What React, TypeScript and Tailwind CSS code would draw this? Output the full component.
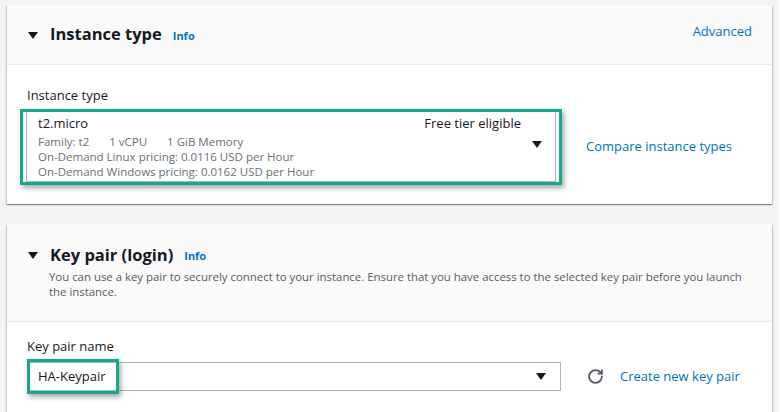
import React from 'react';
import { RotateCw } from 'lucide-react';

const Caret = ({ className = '' }: { className?: string }) => (
  <svg width="10" height="7" viewBox="0 0 10 7" className={className}>
    <polygon points="0,0 10,0 5,7" fill="#16191f" />
  </svg>
);

const panel = 'bg-white shadow-[0_1px_1px_0_rgba(0,28,36,0.3),1px_1px_1px_0_rgba(0,28,36,0.15),-1px_1px_1px_0_rgba(0,28,36,0.15)]';

export default function App() {
  return (
    <div className="min-h-screen bg-[#f2f3f3] px-[7px] pt-[5px] text-[#16191f] font-['Open_Sans',sans-serif] w-[779px]">
      {/* Instance type */}
      <div className={panel}>
        <div className="h-[60px] bg-[#fafafa] border-b border-[#eaeded] flex items-center pl-[21px] pr-[20px]">
          <Caret className="mr-[12px] mt-[1px]" />
          <h2 className="text-[16.5px] font-bold leading-none">Instance type</h2>
          <span className="ml-[11px] mt-[3px] text-[11px] font-bold text-[#0073bb]">Info</span>
          <span className="ml-auto -mt-[5px] text-[13px] text-[#0073bb]">Advanced</span>
        </div>
        <div className="h-[139px] pl-[13px] pt-[20px]">
          <div className="pl-[7px] text-[13px] leading-[20px]">Instance type</div>
          <div className="mt-[4px] flex items-center">
            <div className="w-[542px] h-[76px] border-[3px] border-[#14a88c] shadow-[2px_3px_5px_rgba(0,0,0,0.35)]">
              <div className="h-[70px] mx-[3px] border-x border-b border-[#aab7b8] flex pl-[11px] pr-[13px] pt-[1px]">
                <div className="flex-1">
                  <div className="text-[13px] leading-[21px]">t2.micro</div>
                  <div className="text-[11.5px] leading-[15px] text-[#687078]">
                    <div className="flex">
                      <span>Family: t2</span>
                      <span className="ml-[20px]">1 vCPU</span>
                      <span className="ml-[20px]">1 GiB Memory</span>
                    </div>
                    <div>On-Demand Linux pricing: 0.0116 USD per Hour</div>
                    <div>On-Demand Windows pricing: 0.0162 USD per Hour</div>
                  </div>
                </div>
                <div className="flex flex-col items-end">
                  <div className="text-[13px] leading-[21px] mr-[21px]">Free tier eligible</div>
                  <Caret className="mt-[7px]" />
                </div>
              </div>
            </div>
            <span className="ml-[24px] text-[13px] text-[#0073bb]">Compare instance types</span>
          </div>
        </div>
      </div>

      {/* Key pair */}
      <div className={`${panel} mt-[20px]`}>
        <div className="h-[98px] bg-[#fafafa] border-b border-[#eaeded] pl-[21px] pr-[20px] pt-[20px]">
          <div className="flex items-center">
            <Caret className="mr-[12px] mt-[1px]" />
            <h2 className="text-[16.5px] font-bold leading-[22px]">Key pair (login)</h2>
            <span className="ml-[11px] mt-[3px] text-[11px] font-bold text-[#0073bb]">Info</span>
          </div>
          <p className="ml-[21px] mt-[3px] text-[11.4px] leading-[15px] text-[#545b64] max-w-[700px]">
            You can use a key pair to securely connect to your instance. Ensure that you have access to the selected key pair before you launch the instance.
          </p>
        </div>
        <div className="h-[90px] pl-[20px] pt-[14px]">
          <div className="text-[13px] leading-[20px]">Key pair name</div>
          <div className="mt-[6px] flex items-center">
            <div className="relative w-[534px] h-[29px] border border-[#aab7b8] flex items-center pl-[10px] pr-[14px]">
              <span className="text-[13px]">HA-Keypair</span>
              <Caret className="ml-auto" />
              <div className="absolute -left-px -top-[4px] w-[92px] h-[35px] border-[3px] border-[#14a88c] shadow-[2px_3px_5px_rgba(0,0,0,0.35)]" />
            </div>
            <RotateCw size={17} strokeWidth={2.6} className="ml-[26px] text-[#545b64]" />
            <span className="ml-[16px] text-[13px] text-[#0073bb]">Create new key pair</span>
          </div>
        </div>
      </div>
    </div>
  );
}
